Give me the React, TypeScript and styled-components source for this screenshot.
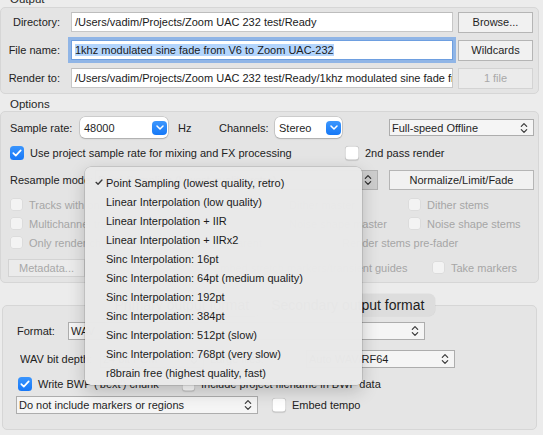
import React from "react";
import styled, { createGlobalStyle, css } from "styled-components";

const GlobalStyle = createGlobalStyle`
  html, body { margin: 0; padding: 0; background: #ececec; }
  body {
    font-family: "Liberation Sans", Arial, Helvetica, sans-serif;
    font-size: 11px;
    color: #1f1f1f;
    overflow: hidden;
  }
  * { box-sizing: border-box; }
`;

const Frame = styled.div`
  position: relative;
  width: 543px;
  height: 435px;
  overflow: hidden;
  background: #ececec;
`;

const Content = styled.div`
  display: flex;
  flex-direction: column;
  margin-top: -8px;
`;

const GroupLabel = styled.div<{ $mt?: number; $mb?: number }>`
  height: 14px;
  line-height: 14px;
  padding-left: 10px;
  margin-top: ${(p) => p.$mt ?? 0}px;
  margin-bottom: ${(p) => p.$mb ?? 0}px;
  font-size: 11.5px;
  color: #262626;
`;

const GroupBox = styled.div<{ $h: number; $pt: number; $pl: number }>`
  width: 539px;
  height: ${(p) => p.$h}px;
  background: #e4e4e4;
  border: 1px solid #d6d6d6;
  border-radius: 5px;
  display: flex;
  flex-direction: column;
  padding-top: ${(p) => p.$pt}px;
  padding-left: ${(p) => p.$pl}px;
  flex-shrink: 0;
`;

const Row = styled.div<{ $h: number; $mt?: number }>`
  display: flex;
  align-items: center;
  height: ${(p) => p.$h}px;
  margin-top: ${(p) => p.$mt ?? 0}px;
  white-space: nowrap;
  flex-shrink: 0;
`;

const FieldLabel = styled.span<{ $w: number; $right?: boolean; $ml?: number }>`
  width: ${(p) => p.$w}px;
  margin-left: ${(p) => p.$ml ?? 0}px;
  flex-shrink: 0;
  text-align: ${(p) => (p.$right ? "right" : "left")};
  padding-right: ${(p) => (p.$right ? 0 : 4)}px;
  color: #222;
  overflow: hidden;
`;

const TextField = styled.div<{ $focused?: boolean }>`
  width: 382px;
  height: 20px;
  margin-left: 11px;
  flex-shrink: 0;
  background: #fff;
  border: 1px solid #c7c7c7;
  border-top-color: #bdbdbd;
  padding: 0 3px;
  display: flex;
  align-items: center;
  overflow: hidden;
  white-space: nowrap;
  color: #1a1a1a;
  ${(p) =>
    p.$focused &&
    css`
      border-color: #6e9fe0;
      box-shadow: 0 0 0 3px rgba(74, 142, 232, 0.55);
      position: relative;
      z-index: 1;
    `}
`;

const Selected = styled.span`
  background: #b3d5fd;
`;

const PushButton = styled.div<{ $w: number; $h?: number; $ml?: number; $disabled?: boolean }>`
  width: ${(p) => p.$w}px;
  height: ${(p) => p.$h ?? 21}px;
  margin-left: ${(p) => p.$ml ?? 0}px;
  flex-shrink: 0;
  display: flex;
  align-items: center;
  justify-content: center;
  background: ${(p) => (p.$disabled ? "#ebebeb" : "#f1f1f1")};
  border: 1px solid ${(p) => (p.$disabled ? "#d3d3d3" : "#b5b5b5")};
  color: ${(p) => (p.$disabled ? "#a8a8a8" : "#1f1f1f")};
`;

const PillSelect = styled.div<{ $w: number }>`
  width: ${(p) => p.$w}px;
  height: 21px;
  flex-shrink: 0;
  background: #fff;
  border-radius: 5px;
  box-shadow: 0 0 0 0.5px rgba(0, 0, 0, 0.2), 0 1px 1.5px rgba(0, 0, 0, 0.16);
  display: flex;
  align-items: center;
  justify-content: space-between;
  padding: 0 1px 0 4px;
  color: #1f1f1f;
`;

const BlueKnob = styled.span`
  width: 15px;
  height: 14px;
  border-radius: 4px;
  background: linear-gradient(#3d97fd, #1578f7);
  display: flex;
  align-items: center;
  justify-content: center;
`;

const FlatPopup = styled.div<{ $w: number; $h?: number; $ml?: number; $pressed?: boolean }>`
  width: ${(p) => p.$w}px;
  height: ${(p) => p.$h ?? 18}px;
  margin-left: ${(p) => p.$ml ?? 0}px;
  flex-shrink: 0;
  display: flex;
  align-items: center;
  justify-content: space-between;
  padding: 0 5px 0 2px;
  background: ${(p) => (p.$pressed ? "#cdcdcd" : "#f5f5f5")};
  border: 1px solid ${(p) => (p.$pressed ? "#b2b2b2" : "#adadad")};
  color: #1f1f1f;
  overflow: hidden;
  white-space: nowrap;
`;

const Plain = styled.span<{ $w?: number; $ml?: number }>`
  ${(p) => (p.$w ? `width: ${p.$w}px;` : "")}
  margin-left: ${(p) => p.$ml ?? 0}px;
  flex-shrink: 0;
  color: #222;
`;

const CheckItem = styled.label<{ $w?: number; $ml?: number; $disabled?: boolean }>`
  display: flex;
  align-items: center;
  gap: 6px;
  ${(p) => (p.$w ? `width: ${p.$w}px;` : "")}
  margin-left: ${(p) => p.$ml ?? 0}px;
  flex-shrink: 0;
  color: ${(p) => (p.$disabled ? "#a6a6a6" : "#222")};
  white-space: nowrap;
`;

const Box = styled.span<{ $checked?: boolean; $disabled?: boolean; $size?: number }>`
  width: ${(p) => p.$size ?? 14}px;
  height: ${(p) => p.$size ?? 14}px;
  flex-shrink: 0;
  border-radius: 3.5px;
  display: flex;
  align-items: center;
  justify-content: center;
  ${(p) =>
    p.$checked
      ? css`
          background: linear-gradient(#3a95fd, #1677f7);
        `
      : p.$disabled
      ? css`
          background: #f3f3f3;
          box-shadow: inset 0 0 0 1px #dcdcdc;
        `
      : css`
          background: #fff;
          box-shadow: inset 0 0 0 0.5px rgba(0, 0, 0, 0.25), 0 0.5px 1px rgba(0, 0, 0, 0.12);
        `}
`;

const TabArea = styled.div`
  display: flex;
  flex-direction: column;
  margin-top: 11px;
  margin-left: 2px;
  width: 535px;
`;

const TabStrip = styled.div`
  position: relative;
  z-index: 1;
  display: flex;
  justify-content: center;
  height: 22px;
`;

const Segmented = styled.div`
  display: flex;
  height: 22px;
  border-radius: 6px;
  background: #dddddd;
  box-shadow: 0 0 0 0.5px rgba(0, 0, 0, 0.06);
`;

const Tab = styled.div<{ $active?: boolean }>`
  padding: 0 11px;
  font-size: 14px;
  line-height: 22px;
  color: #1e1e1e;
  border-radius: 6px;
  ${(p) =>
    p.$active &&
    css`
      background: #f8f8f8;
      box-shadow: 0 0.5px 1px rgba(0, 0, 0, 0.2);
    `}
`;

const TabPanel = styled.div`
  margin-top: -11px;
  height: 125px;
  background: #e5e5e5;
  border: 1px solid #d6d6d6;
  border-radius: 5px;
  padding: 16px 0 0 13px;
  display: flex;
  flex-direction: column;
`;

const Menu = styled.div`
  position: absolute;
  left: 85px;
  top: 167px;
  width: 277px;
  height: 218px;
  padding-top: 6px;
  background: rgba(233, 233, 233, 0.99);
  border-radius: 6px;
  box-shadow: 0 0 0 0.5px rgba(0, 0, 0, 0.2), 0 6px 18px rgba(0, 0, 0, 0.2);
  z-index: 5;
`;

const MenuItem = styled.div`
  height: 19px;
  display: flex;
  align-items: center;
  padding-left: 10px;
  color: #1b1b1b;
  white-space: nowrap;
`;

const CheckSlot = styled.span`
  width: 11px;
  display: inline-flex;
  align-items: center;
  flex-shrink: 0;
`;

const UpDown = ({ color = "#3a3a3a" }: { color?: string }) => (
  <svg width="8" height="12" viewBox="0 0 8 12" fill="none" stroke={color} strokeWidth="1.2" strokeLinecap="round" strokeLinejoin="round">
    <path d="M1.3 4.4 L4 1.6 L6.7 4.4" />
    <path d="M1.3 7.6 L4 10.4 L6.7 7.6" />
  </svg>
);

const ChevronDown = () => (
  <svg width="8" height="5" viewBox="0 0 8 5" fill="none" stroke="#fff" strokeWidth="1.5" strokeLinecap="round" strokeLinejoin="round">
    <path d="M1 1 L4 4 L7 1" />
  </svg>
);

const CheckMark = ({ color = "#fff", w = 10 }: { color?: string; w?: number }) => (
  <svg width={w} height={w * 0.8} viewBox="0 0 10 8" fill="none" stroke={color} strokeWidth="1.7" strokeLinecap="round" strokeLinejoin="round">
    <path d="M1.3 4.2 L3.8 6.6 L8.7 1.3" />
  </svg>
);

const Check = ({ label, checked, disabled, w, ml, size }: { label: string; checked?: boolean; disabled?: boolean; w?: number; ml?: number; size?: number }) => (
  <CheckItem $w={w} $ml={ml} $disabled={disabled}>
    <Box $checked={checked} $disabled={disabled} $size={size}>
      {checked && <CheckMark />}
    </Box>
    <span>{label}</span>
  </CheckItem>
);

const menuItems = [
  "Point Sampling (lowest quality, retro)",
  "Linear Interpolation (low quality)",
  "Linear Interpolation + IIR",
  "Linear Interpolation + IIRx2",
  "Sinc Interpolation: 16pt",
  "Sinc Interpolation: 64pt (medium quality)",
  "Sinc Interpolation: 192pt",
  "Sinc Interpolation: 384pt",
  "Sinc Interpolation: 512pt (slow)",
  "Sinc Interpolation: 768pt (very slow)",
  "r8brain free (highest quality, fast)",
];

export default function App() {
  return (
    <Frame>
      <GlobalStyle />
      <Content>
        <GroupLabel $mb={1}>Output</GroupLabel>
        <GroupBox $h={87} $pt={4} $pl={0}>
          <Row $h={20}>
            <FieldLabel $w={59} $right>Directory:</FieldLabel>
            <TextField>/Users/vadim/Projects/Zoom UAC 232 test/Ready</TextField>
            <PushButton $w={75} $ml={5}>Browse...</PushButton>
          </Row>
          <Row $h={20} $mt={8}>
            <FieldLabel $w={59} $right>File name:</FieldLabel>
            <TextField $focused>
              <Selected>1khz modulated sine fade from V6 to Zoom UAC-232</Selected>
            </TextField>
            <PushButton $w={75} $ml={5}>Wildcards</PushButton>
          </Row>
          <Row $h={20} $mt={8}>
            <FieldLabel $w={59} $right>Render to:</FieldLabel>
            <TextField>/Users/vadim/Projects/Zoom UAC 232 test/Ready/1khz modulated sine fade from V6 to Zoom UAC-232.wav</TextField>
            <PushButton $w={75} $ml={5} $disabled>1 file</PushButton>
          </Row>
        </GroupBox>

        <GroupLabel $mt={3}>Options</GroupLabel>
        <GroupBox $h={172} $pt={5} $pl={9}>
          <Row $h={21}>
            <FieldLabel $w={70}>Sample rate:</FieldLabel>
            <PillSelect $w={88}>
              <span>48000</span>
              <BlueKnob><ChevronDown /></BlueKnob>
            </PillSelect>
            <Plain $w={41} $ml={10}>Hz</Plain>
            <FieldLabel $w={56}>Channels:</FieldLabel>
            <PillSelect $w={67}>
              <span>Stereo</span>
              <BlueKnob><ChevronDown /></BlueKnob>
            </PillSelect>
            <FlatPopup $w={145} $h={17} $ml={47}>
              <span>Full-speed Offline</span>
              <UpDown />
            </FlatPopup>
          </Row>
          <Row $h={16} $mt={7}>
            <Check w={335} checked label="Use project sample rate for mixing and FX processing" />
            <Check label="2nd pass render" />
          </Row>
          <Row $h={20} $mt={9}>
            <FieldLabel $w={85}>Resample mode:</FieldLabel>
            <FlatPopup $w={283} $h={20} $pressed>
              <span>Point Sampling (lowest quality, retro)</span>
              <UpDown color="#2e2e2e" />
            </FlatPopup>
            <PushButton $w={145} $h={20} $ml={11}>Normalize/Limit/Fade</PushButton>
          </Row>
          <Row $h={19} $mt={5}>
            <Check w={260} disabled size={13} label="Tracks with only mono media to mono files" />
            <Check w={138} disabled size={13} label="Dither master" />
            <Check disabled size={13} label="Dither stems" />
          </Row>
          <Row $h={19}>
            <Check w={260} disabled size={13} label="Multichannel tracks to multichannel files" />
            <Check w={138} disabled size={13} label="Noise shape master" />
            <Check disabled size={13} label="Noise shape stems" />
          </Row>
          <Row $h={19}>
            <Check w={313} disabled size={13} label="Only render channels that are sending to parent" />
            <Check disabled size={13} label="Render stems pre-fader" />
          </Row>
          <Row $h={19} $mt={6}>
            <PushButton $w={77} $h={18} $ml={-2} $disabled>Metadata...</PushButton>
            <Check w={238} ml={109} disabled size={13} label="Embed stretch markers/transient guides" />
            <Check disabled size={13} label="Take markers" />
          </Row>
        </GroupBox>

        <TabArea>
          <TabStrip>
            <Segmented>
              <Tab $active>Primary output format</Tab>
              <Tab>Secondary output format</Tab>
            </Segmented>
          </TabStrip>
          <TabPanel>
            <Row $h={18}>
              <FieldLabel $w={51} $ml={1}>Format:</FieldLabel>
              <FlatPopup $w={357}>
                <span>WAV</span>
                <UpDown />
              </FlatPopup>
            </Row>
            <Row $h={18} $mt={10}>
              <FieldLabel $w={80} $ml={4}>WAV bit depth:</FieldLabel>
              <FlatPopup $w={104}>
                <span>24 bit PCM</span>
                <UpDown />
              </FlatPopup>
              <FieldLabel $w={102} $ml={0}>&nbsp;&nbsp;Large files:</FieldLabel>
              <FlatPopup $w={149}>
                <span>Auto WAV/RF64</span>
                <UpDown />
              </FlatPopup>
            </Row>
            <Row $h={16} $mt={8}>
              <Check w={164} ml={2} checked label="Write BWF ('bext') chunk" />
              <Check size={13} label="Include project filename in BWF data" />
            </Row>
            <Row $h={18} $mt={4}>
              <FlatPopup $w={242}>
                <span>Do not include markers or regions</span>
                <UpDown />
              </FlatPopup>
              <Check ml={14} label="Embed tempo" />
            </Row>
          </TabPanel>
        </TabArea>
      </Content>

      <Menu>
        {menuItems.map((item, i) => (
          <MenuItem key={item}>
            <CheckSlot>{i === 0 && <CheckMark color="#3a3a3a" w={8} />}</CheckSlot>
            <span>{item}</span>
          </MenuItem>
        ))}
      </Menu>
    </Frame>
  );
}
